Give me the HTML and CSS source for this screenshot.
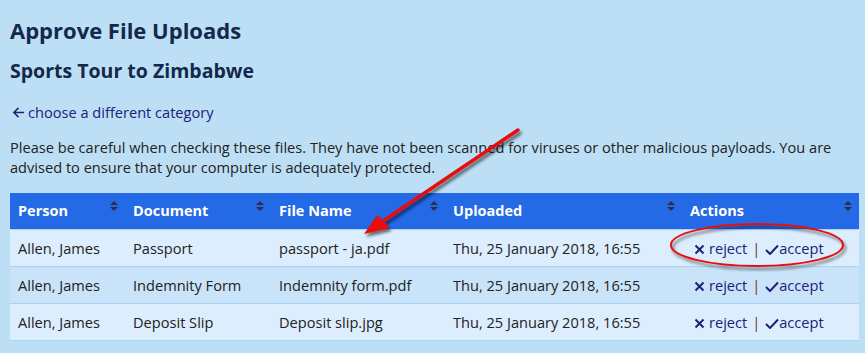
FILE: index.html
```html
<!DOCTYPE html>
<html lang="en">
<head>
    <meta charset="UTF-8">
    <meta name="viewport" content="width=device-width, initial-scale=1.0">
    <title>Approve File Uploads</title>
    <link rel="stylesheet" href="styles.css">
</head>
<body>
    <div class="page">
        <h1>Approve File Uploads</h1>
        <h2>Sports Tour to Zimbabwe</h2>
        <a class="back-link" href="#">
            <svg class="back-icon" viewBox="0 0 14 14" width="13" height="13"><path d="M13 7H2M7 2L2 7l5 5" fill="none" stroke="currentColor" stroke-width="1.6"/></svg>choose a different category
        </a>
        <p class="warning">Please be careful when checking these files. They have not been scanned for viruses or other malicious payloads. You are advised to ensure that your computer is adequately protected.</p>

        <table class="uploads">
            <colgroup>
                <col style="width: 115px">
                <col style="width: 146px">
                <col style="width: 174px">
                <col style="width: 237px">
                <col>
            </colgroup>
            <thead>
                <tr>
                    <th>Person<span class="sort"></span></th>
                    <th>Document<span class="sort"></span></th>
                    <th>File Name<span class="sort"></span></th>
                    <th>Uploaded<span class="sort"></span></th>
                    <th>Actions<span class="sort"></span></th>
                </tr>
            </thead>
            <tbody id="rows"></tbody>
        </table>

        <!-- annotation drawn on top of the screenshot -->
        <svg class="markup" width="865" height="353" viewBox="0 0 865 353">
            <defs>
                <filter id="shadow" x="-10%" y="-10%" width="130%" height="130%">
                    <feDropShadow dx="2" dy="3" stdDeviation="1.5" flood-color="#000" flood-opacity="0.55"/>
                </filter>
            </defs>
            <g filter="url(#shadow)">
                <line x1="518" y1="130" x2="380" y2="223" stroke="#e8100e" stroke-width="3.5" stroke-linecap="round"/>
                <polygon points="364,234 377,215 390,228" fill="#e8100e"/>
                <ellipse cx="757" cy="245" rx="86" ry="21" fill="none" stroke="#e8100e" stroke-width="2"/>
            </g>
        </svg>
    </div>

    <script>
        const uploads = [
            { person: "Allen, James", doc: "Passport", file: "passport - ja.pdf", date: "Thu, 25 January 2018, 16:55" },
            { person: "Allen, James", doc: "Indemnity Form", file: "Indemnity form.pdf", date: "Thu, 25 January 2018, 16:55" },
            { person: "Allen, James", doc: "Deposit Slip", file: "Deposit slip.jpg", date: "Thu, 25 January 2018, 16:55" }
        ];

        const rows = document.getElementById("rows");
        uploads.forEach(function(item) {
            const tr = document.createElement("tr");
            tr.innerHTML = `
                <td>${item.person}</td>
                <td>${item.doc}</td>
                <td>${item.file}</td>
                <td>${item.date}</td>
                <td class="actions">
                    <a href="#"><svg class="x-icon" viewBox="0 0 11 11" width="11" height="11"><path d="M1.5 1.5l8 8M9.5 1.5l-8 8" stroke="currentColor" stroke-width="2" fill="none"/></svg>reject</a><span class="sep">|</span><a href="#"><svg class="check-icon" viewBox="0 0 14 11" width="14" height="11"><path d="M1 6l4 4L13 1.5" stroke="currentColor" stroke-width="2" fill="none"/></svg>accept</a>
                </td>
            `;
            rows.appendChild(tr);
        });
    </script>
</body>
</html>
```

FILE: styles.css
```css
body {
    margin: 0;
    background-color: #bcdff5;
    font-family: 'Open Sans', 'Liberation Sans', sans-serif;
    color: #222;
}

.page {
    position: relative;
    padding: 0 10px;
}

h1 {
    margin: 0;
    padding-top: 14px;
    font-size: 22px;
    line-height: 32px;
    color: #13284a;
}

h2 {
    margin: 12px 0 0;
    font-size: 19.5px;
    line-height: 26px;
    color: #13284a;
}

.back-link {
    display: inline-flex;
    align-items: center;
    margin-top: 18px;
    font-size: 14.6px;
    line-height: 20px;
    color: #20207a;
    text-decoration: none;
}

.back-icon {
    margin: 0 3px 0 2px;
}

.warning {
    margin: 13px 0 0;
    font-size: 14.6px;
    line-height: 20px;
    color: #222;
}

.uploads {
    width: 849px;
    margin-top: 16px;
    border-collapse: collapse;
    table-layout: fixed;
    font-size: 14.6px;
}

.uploads th {
    position: relative;
    height: 36px;
    padding: 0 8px;
    background-color: #2469e6;
    color: #fff;
    text-align: left;
    font-weight: bold;
    font-size: 14.5px;
}

.sort {
    position: absolute;
    right: 7px;
    top: 8px;
    width: 8px;
    height: 10px;
}

.sort::before, .sort::after {
    content: "";
    position: absolute;
    left: 0;
    border-left: 4px solid transparent;
    border-right: 4px solid transparent;
}

.sort::before {
    top: 0;
    border-bottom: 4px solid #2a2f45;
}

.sort::after {
    bottom: 0;
    border-top: 4px solid #2a2f45;
}

.uploads td {
    height: 36px;
    padding: 0 8px;
    border-top: 1px solid #a9d3f6;
    border-bottom: 1px solid #a9d3f6;
    background-color: #dcedfd;
    color: #222;
    white-space: nowrap;
}

.uploads tbody tr:nth-child(even) td {
    background-color: #c9e4f9;
}

.actions {
    padding-left: 12px !important;
}

.actions a {
    color: #20207a;
    text-decoration: none;
}

.x-icon {
    margin-right: 4px;
    vertical-align: -1px;
}

.check-icon {
    margin-right: 0;
    vertical-align: -1px;
}

.sep {
    margin: 0 5px;
    color: #7a3030;
}

.markup {
    position: absolute;
    left: 0;
    top: 0;
    pointer-events: none;
}
```
